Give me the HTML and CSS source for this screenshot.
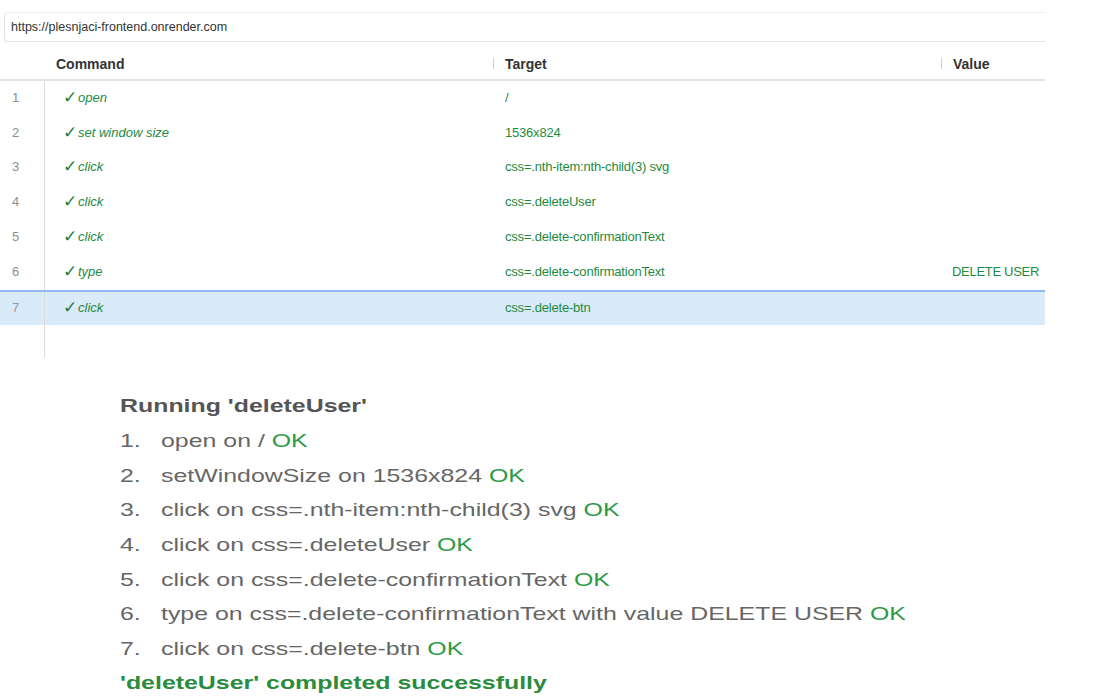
FILE: index.html
```html
<!DOCTYPE html>
<html>
<head>
<meta charset="utf-8">
<link rel="stylesheet" href="styles.css">
</head>
<body>
<div class="panel">
  <div class="urlbar">https://plesnjaci-frontend.onrender.com</div>
  <div class="table">
    <div class="thead">
      <div class="c-num"></div>
      <div class="c-cmd th">Command</div>
      <div class="c-tgt th"><span class="sep"></span>Target</div>
      <div class="c-val th"><span class="sep"></span>Value</div>
    </div>
    <div class="tbody">
      <div class="row"><div class="c-num">1</div><div class="c-cmd"><span class="chk">✓</span><i>open</i></div><div class="c-tgt">/</div><div class="c-val"></div></div>
      <div class="row"><div class="c-num">2</div><div class="c-cmd"><span class="chk">✓</span><i>set window size</i></div><div class="c-tgt">1536x824</div><div class="c-val"></div></div>
      <div class="row"><div class="c-num">3</div><div class="c-cmd"><span class="chk">✓</span><i>click</i></div><div class="c-tgt">css=.nth-item:nth-child(3) svg</div><div class="c-val"></div></div>
      <div class="row"><div class="c-num">4</div><div class="c-cmd"><span class="chk">✓</span><i>click</i></div><div class="c-tgt">css=.deleteUser</div><div class="c-val"></div></div>
      <div class="row"><div class="c-num">5</div><div class="c-cmd"><span class="chk">✓</span><i>click</i></div><div class="c-tgt">css=.delete-confirmationText</div><div class="c-val"></div></div>
      <div class="row"><div class="c-num">6</div><div class="c-cmd"><span class="chk">✓</span><i>type</i></div><div class="c-tgt">css=.delete-confirmationText</div><div class="c-val">DELETE USER</div></div>
      <div class="row selected"><div class="c-num">7</div><div class="c-cmd"><span class="chk">✓</span><i>click</i></div><div class="c-tgt">css=.delete-btn</div><div class="c-val"></div></div>
      <div class="row empty"><div class="c-num"></div><div class="c-cmd"></div><div class="c-tgt"></div><div class="c-val"></div></div>
    </div>
  </div>
</div>
<div class="log">
  <div class="log-inner">
    <div class="log-title">Running 'deleteUser'</div>
    <ol class="log-list">
      <li><span class="n">1.</span><span>open on / <span class="ok">OK</span></span></li>
      <li><span class="n">2.</span><span>setWindowSize on 1536x824 <span class="ok">OK</span></span></li>
      <li><span class="n">3.</span><span>click on css=.nth-item:nth-child(3) svg <span class="ok">OK</span></span></li>
      <li><span class="n">4.</span><span>click on css=.deleteUser <span class="ok">OK</span></span></li>
      <li><span class="n">5.</span><span>click on css=.delete-confirmationText <span class="ok">OK</span></span></li>
      <li><span class="n">6.</span><span>type on css=.delete-confirmationText with value DELETE USER <span class="ok">OK</span></span></li>
      <li><span class="n">7.</span><span>click on css=.delete-btn <span class="ok">OK</span></span></li>
    </ol>
    <div class="log-done">'deleteUser' completed successfully</div>
  </div>
</div>
</body>
</html>
```
FILE: styles.css
```css
* { box-sizing: border-box; }
html, body { margin: 0; padding: 0; background: #fff; }
body { font-family: "Liberation Sans", Arial, sans-serif; width: 1103px; height: 699px; overflow: hidden; }

.panel { width: 1045px; padding-top: 12px; }
.urlbar {
  margin-left: 4px;
  height: 30px;
  border-left: 1px solid #e2e2e2;
  border-bottom: 1px solid #e2e2e2;
  border-top: 1px solid #f1f1f1;
  border-radius: 3px 0 0 3px;
  padding-left: 6px;
  font-size: 12.5px;
  color: #333;
  display: flex;
  align-items: center;
}

.thead {
  display: flex;
  height: 39px;
  border-bottom: 2px solid #e3e3e3;
  align-items: center;
  padding-top: 6px;
}
.th { font-size: 14px; font-weight: bold; color: #333; display: flex; align-items: center; }
.sep { width: 1px; height: 11px; background: #cfcfcf; margin-right: 11px; }

.c-num { width: 45px; flex: none; padding-left: 12px; color: #8e8e8e; font-size: 13px; }
.c-cmd { width: 448px; flex: none; padding-left: 11px; }
.c-tgt { width: 448px; flex: none; }
.c-val { flex: 1; }

.tbody .c-num { border-right: 1px solid #dcdcdc; height: 100%; display: flex; align-items: center; padding-bottom: 2px; }
.row { display: flex; height: 34.8px; align-items: center; }
.row .c-cmd, .row .c-tgt, .row .c-val { padding-bottom: 2px; }
.row .c-cmd { padding-left: 18px; color: #228a44; font-size: 13px; display: flex; align-items: center; }
.row .c-tgt { padding-left: 12px; color: #1f8a3e; font-size: 13px; letter-spacing: -0.2px; }
.row .c-val { padding-left: 11px; color: #1f8a3e; font-size: 13px; letter-spacing: -0.3px; }
.chk { font-family: "DejaVu Sans", sans-serif; font-size: 17px; color: #1d7f3c; width: 15px; line-height: 1; }
.row i { font-style: italic; }
.selected { background: #d9eaf9; border-top: 2px solid #93b9ee; }
.selected .c-num { color: #9a9a9a; }
.row.empty { height: 33px; }

.log { padding-left: 120px; padding-top: 36px; }
.log-inner { transform: scaleX(1.31); transform-origin: 0 0; width: 700px; }
.log-title { font-size: 19px; font-weight: bold; color: #555; height: 24px; line-height: 24px; }
.log-list { list-style: none; margin: 0; padding: 0; margin-top: 6px; }
.log-list li { display: flex; height: 34.67px; align-items: center; font-size: 19px; color: #666; }
.log-list .n { width: 31.3px; flex: none; }
.ok { color: #2b9a45; }
.log-done { font-size: 19px; font-weight: bold; color: #2a8c3c; margin-top: 6px; }
```
